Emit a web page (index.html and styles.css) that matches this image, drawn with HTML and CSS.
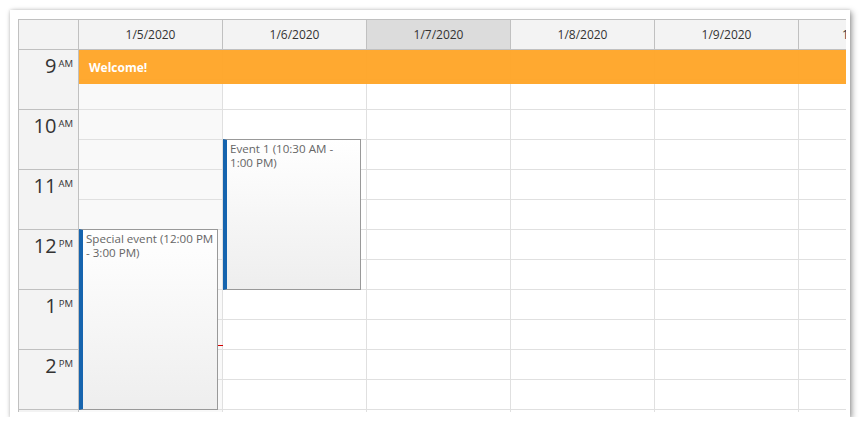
FILE: index.html
```html
<!DOCTYPE html>
<html>
<head>
<meta charset="utf-8">
<link rel="stylesheet" href="styles.css">
</head>
<body>
<div class="card">
  <div class="cal">
    <div class="head">
      <div class="corner"></div>
      <div class="dh">1/5/2020</div>
      <div class="dh">1/6/2020</div>
      <div class="dh dh-sel">1/7/2020</div>
      <div class="dh">1/8/2020</div>
      <div class="dh">1/9/2020</div>
      <div class="dh">1/10/2020</div>
    </div>
    <div class="body">
      <div class="rowheads">
        <div class="rh"><span class="hn">9</span><span class="ap">AM</span></div>
        <div class="rh"><span class="hn">10</span><span class="ap">AM</span></div>
        <div class="rh"><span class="hn">11</span><span class="ap">AM</span></div>
        <div class="rh"><span class="hn">12</span><span class="ap">PM</span></div>
        <div class="rh"><span class="hn">1</span><span class="ap">PM</span></div>
        <div class="rh"><span class="hn">2</span><span class="ap">PM</span></div>
        <div class="rh"></div>
      </div>
      <div class="grid">
        <div class="col col-off">
          <div class="c"></div><div class="c"></div><div class="c"></div><div class="c"></div>
          <div class="c"></div><div class="c"></div><div class="c"></div><div class="c"></div>
          <div class="c"></div><div class="c"></div><div class="c"></div><div class="c"></div>
          <div class="c"></div><div class="c"></div>
          <div class="ev ev-special"><div class="ev-text">Special event (12:00 PM - 3:00 PM)</div></div>
          <div class="now"></div>
        </div>
        <div class="col">
          <div class="c"></div><div class="c"></div><div class="c"></div><div class="c"></div>
          <div class="c"></div><div class="c"></div><div class="c"></div><div class="c"></div>
          <div class="c"></div><div class="c"></div><div class="c"></div><div class="c"></div>
          <div class="c"></div><div class="c"></div>
          <div class="ev ev-one"><div class="ev-text">Event 1 (10:30 AM - 1:00 PM)</div></div>
        </div>
        <div class="col">
          <div class="c"></div><div class="c"></div><div class="c"></div><div class="c"></div>
          <div class="c"></div><div class="c"></div><div class="c"></div><div class="c"></div>
          <div class="c"></div><div class="c"></div><div class="c"></div><div class="c"></div>
          <div class="c"></div><div class="c"></div>
        </div>
        <div class="col">
          <div class="c"></div><div class="c"></div><div class="c"></div><div class="c"></div>
          <div class="c"></div><div class="c"></div><div class="c"></div><div class="c"></div>
          <div class="c"></div><div class="c"></div><div class="c"></div><div class="c"></div>
          <div class="c"></div><div class="c"></div>
        </div>
        <div class="col">
          <div class="c"></div><div class="c"></div><div class="c"></div><div class="c"></div>
          <div class="c"></div><div class="c"></div><div class="c"></div><div class="c"></div>
          <div class="c"></div><div class="c"></div><div class="c"></div><div class="c"></div>
          <div class="c"></div><div class="c"></div>
        </div>
        <div class="col">
          <div class="c"></div><div class="c"></div><div class="c"></div><div class="c"></div>
          <div class="c"></div><div class="c"></div><div class="c"></div><div class="c"></div>
          <div class="c"></div><div class="c"></div><div class="c"></div><div class="c"></div>
          <div class="c"></div><div class="c"></div>
        </div>
        <div class="welcome">Welcome!</div>
      </div>
    </div>
  </div>
</div>
</body>
</html>
```

FILE: styles.css
```css
* { box-sizing: border-box; }
html, body { margin: 0; padding: 0; background: #fff; }
body { font-family: "Open Sans", "Noto Sans", sans-serif; font-size: 12px; color: #333; }

.card {
  margin: 10px 0 0 10px;
  width: 840px;
  height: 407px;
  background: #fff;
  box-shadow: 2px 2px 6px rgba(0,0,0,0.38), 0 0 3px rgba(0,0,0,0.15);
  padding: 9px 0 0 8px;
}

.cal {
  width: 828px;
  height: 393px;
  overflow: hidden;
  border-left: 1px solid #c0c0c0;
  border-top: 1px solid #c0c0c0;
}

.head {
  display: flex;
  height: 30px;
  width: max-content;
}
.corner {
  flex: 0 0 60px;
  background: #f3f3f3;
  border-right: 1px solid #c0c0c0;
  border-bottom: 1px solid #c0c0c0;
}
.dh {
  flex: 0 0 144px;
  background: #f3f3f3;
  border-right: 1px solid #c0c0c0;
  border-bottom: 1px solid #c0c0c0;
  display: flex;
  align-items: center;
  justify-content: center;
  color: #333;
}
.dh-sel { background: #dcdcdc; }

.body {
  display: flex;
  height: 362px;
  overflow: hidden;
  width: max-content;
}
.rowheads {
  flex: 0 0 60px;
  background: #f3f3f3;
  border-right: 1px solid #c0c0c0;
}
.rh {
  height: 60px;
  border-bottom: 1px solid #c0c0c0;
  display: flex;
  justify-content: flex-end;
  align-items: flex-start;
  padding: 3px 5px 0 0;
  color: #333;
}
.hn { font-size: 20px; line-height: 26px; }
.ap { font-size: 9.5px; line-height: 12px; margin: 5px 0 0 2px; }

.grid {
  display: flex;
  position: relative;
}
.col {
  flex: 0 0 144px;
  border-right: 1px solid #e0e0e0;
  position: relative;
}
.c {
  height: 30px;
  border-bottom: 1px solid #e0e0e0;
}
.col-off .c { background: #f9f9f9; }

.welcome {
  position: absolute;
  left: 0;
  right: 0;
  top: 0;
  height: 34px;
  background: rgba(255, 166, 40, 0.96);
  color: #fff;
  font-weight: bold;
  display: flex;
  align-items: center;
  padding-left: 10px;
}

.ev {
  position: absolute;
  left: 0;
  border: 1px solid #999;
  border-left: 4px solid #1664ae;
  background: linear-gradient(#ffffff, #eeeeee);
  color: #666;
  overflow: hidden;
}
.ev-text { padding: 2px 0 0 3px; line-height: 14px; font-size: 11.6px; }
.ev-special { top: 179px; height: 181px; right: 4px; }
.ev-one { top: 89px; height: 151px; right: 5px; }
.ev-one .ev-text { padding-right: 8px; }

.now {
  position: absolute;
  top: 295px;
  right: -1px;
  width: 5px;
  height: 1px;
  background: #d40000;
}
```
